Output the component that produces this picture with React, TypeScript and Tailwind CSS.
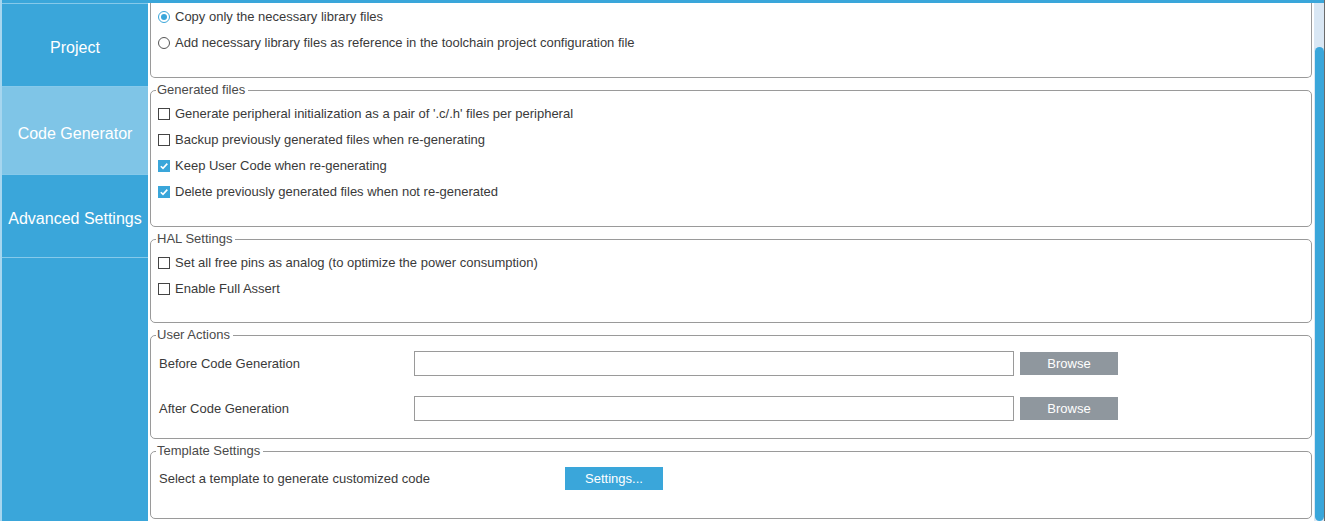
import React from 'react';

const font = { fontFamily: '"Liberation Sans", Arial, sans-serif' };

type Item = { label: string; checked?: boolean };

const Radio = ({ checked }: { checked?: boolean }) => (
  <span
    className={`flex h-[12px] w-[12px] items-center justify-center rounded-full border ${
      checked ? 'border-[#3aa6da]' : 'border-[#555]'
    } bg-white`}
  >
    {checked && <span className="h-[6px] w-[6px] rounded-full bg-[#3aa6da]" />}
  </span>
);

const Checkbox = ({ checked }: { checked?: boolean }) =>
  checked ? (
    <span className="flex h-[12px] w-[12px] items-center justify-center bg-[#3aa6da]">
      <svg width="10" height="10" viewBox="0 0 10 10" fill="none">
        <path d="M1.8 5.2 L4 7.4 L8.3 2.6" stroke="white" strokeWidth="1.6" />
      </svg>
    </span>
  ) : (
    <span className="h-[12px] w-[12px] border border-[#444] bg-white" />
  );

const Row = ({ children, label }: { children: React.ReactNode; label: string }) => (
  <div className="flex h-[26px] items-center gap-[5px] pl-[7px]">
    {children}
    <span>{label}</span>
  </div>
);

const Group = ({
  title,
  height,
  children,
}: {
  title: string;
  height: string;
  children: React.ReactNode;
}) => (
  <fieldset className={`${height} rounded-[5px] border border-[#9a9a9a] px-[5px]`}>
    <legend className="pl-[1px] pr-[3px] leading-[14px] text-[#4a4a4a]">{title}</legend>
    <div className="-mx-[5px]">{children}</div>
  </fieldset>
);

const BrowseRow = ({ label }: { label: string }) => (
  <div className="flex h-[25px] items-center pl-[8px]">
    <span className="w-[255px]">{label}</span>
    <div className="h-[25px] w-[600px] border border-[#9a9a9a] bg-white" />
    <button className="ml-[6px] h-[23px] w-[98px] bg-[#8f979e] text-white">Browse</button>
  </div>
);

const navItems = [
  { label: 'Project', active: false, h: 'h-[83px]' },
  { label: 'Code Generator', active: true, h: 'h-[88px]' },
  { label: 'Advanced Settings', active: false, h: 'h-[83px]' },
];

const generated: Item[] = [
  { label: "Generate peripheral initialization as a pair of '.c/.h' files per peripheral" },
  { label: 'Backup previously generated files when re-generating' },
  { label: 'Keep User Code when re-generating', checked: true },
  { label: 'Delete previously generated files when not re-generated', checked: true },
];

const hal: Item[] = [
  { label: 'Set all free pins as analog (to optimize the power consumption)' },
  { label: 'Enable Full Assert' },
];

export default function App() {
  return (
    <div className="h-[526px] w-[1334px] bg-white text-[13px] text-[#3a3a3a]" style={font}>
      <div className="flex h-[521px]">
        {/* side navigation */}
        <nav className="flex w-[148px] flex-col border-l-2 border-[#a6d6ef] bg-[#3aa6da] pt-[3px]">
          {navItems.map((n) => (
            <div
              key={n.label}
              className={`flex ${n.h} items-center justify-center border-t border-[#86c9ea] pt-[6px] text-[16px] text-white ${
                n.active ? 'bg-[#7fc5e7]' : ''
              }`}
            >
              {n.label}
            </div>
          ))}
          <div className="border-t border-[#86c9ea]" />
        </nav>

        {/* settings panel */}
        <div className="flex flex-1 flex-col border-t-[3px] border-[#3aa6da]">
          <div className="flex flex-1">
            <div className="flex flex-1 flex-col gap-[5px] pl-[2px] pr-[2px]">
              <div className="h-[75px] rounded-b-[5px] border-x border-b border-[#9a9a9a] pt-[1px]">
                <Row label="Copy only the necessary library files">
                  <Radio checked />
                </Row>
                <Row label="Add necessary library files as reference in the toolchain project configuration file">
                  <Radio />
                </Row>
              </div>

              <Group title="Generated files" height="h-[144px]">
                <div className="pt-[4px]">
                  {generated.map((g) => (
                    <Row key={g.label} label={g.label}>
                      <Checkbox checked={g.checked} />
                    </Row>
                  ))}
                </div>
              </Group>

              <Group title="HAL Settings" height="h-[91px]">
                <div className="pt-[4px]">
                  {hal.map((g) => (
                    <Row key={g.label} label={g.label}>
                      <Checkbox checked={g.checked} />
                    </Row>
                  ))}
                </div>
              </Group>

              <Group title="User Actions" height="h-[111px]">
                <div className="flex flex-col gap-[20px] pt-[9px]">
                  <BrowseRow label="Before Code Generation" />
                  <BrowseRow label="After Code Generation" />
                </div>
              </Group>

              <Group title="Template Settings" height="h-[75px]">
                <div className="mt-[9px] flex h-[23px] items-center pl-[8px]">
                  <span className="w-[406px]">Select a template to generate customized code</span>
                  <button className="h-[23px] w-[98px] bg-[#3aa6da] text-white">Settings...</button>
                </div>
              </Group>
            </div>

            {/* scrollbar */}
            <div className="flex w-[10px] flex-col bg-[#d9e7f4] pl-[1px] pt-[44px]">
              <div className="flex-1 rounded-full bg-[#3aa6da]" />
            </div>
          </div>
        </div>

        <div className="w-[10px] border-l border-[#6b6b6b] bg-white" />
      </div>
    </div>
  );
}
